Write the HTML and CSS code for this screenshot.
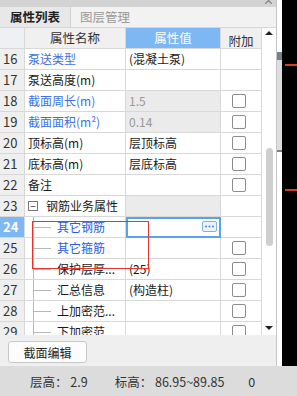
FILE: index.html
```html
<!DOCTYPE html>
<html>
<head>
  <meta charset="utf-8">
  <title>属性列表</title>
  <link rel="stylesheet" href="styles.css">
</head>
<body>
  <div class="screen">
    <div class="main">
      <div class="panel">
        <div class="titlebar">
          <svg class="close" width="7" height="7" viewBox="0 0 7 7"><path d="M0 0L7 7M7 0L0 7" stroke="#8a8a8a" stroke-width="1.4"/></svg>
        </div>

        <div class="tabs">
          <div class="tab active">属性列表</div>
          <div class="tab">图层管理</div>
        </div>

        <div class="grid-wrap">
          <div class="grid">
            <div class="row head">
              <div class="c num"></div>
              <div class="c name center">属性名称</div>
              <div class="c val center sel-head">属性值</div>
              <div class="c ext center">附加</div>
            </div>

            <div class="row">
              <div class="c num">16</div>
              <div class="c name blue">泵送类型</div>
              <div class="c val">(混凝土泵)</div>
              <div class="c ext"></div>
            </div>
            <div class="row">
              <div class="c num">17</div>
              <div class="c name">泵送高度(m)</div>
              <div class="c val"></div>
              <div class="c ext"></div>
            </div>
            <div class="row">
              <div class="c num">18</div>
              <div class="c name blue">截面周长(m)</div>
              <div class="c val off">1.5</div>
              <div class="c ext"><span class="chk"></span></div>
            </div>
            <div class="row">
              <div class="c num">19</div>
              <div class="c name blue">截面面积(m²)</div>
              <div class="c val off">0.14</div>
              <div class="c ext"><span class="chk"></span></div>
            </div>
            <div class="row">
              <div class="c num">20</div>
              <div class="c name">顶标高(m)</div>
              <div class="c val">层顶标高</div>
              <div class="c ext"><span class="chk"></span></div>
            </div>
            <div class="row">
              <div class="c num">21</div>
              <div class="c name">底标高(m)</div>
              <div class="c val">层底标高</div>
              <div class="c ext"><span class="chk"></span></div>
            </div>
            <div class="row">
              <div class="c num">22</div>
              <div class="c name">备注</div>
              <div class="c val"></div>
              <div class="c ext"><span class="chk"></span></div>
            </div>
            <div class="row">
              <div class="c num">23</div>
              <div class="c name"><span class="fold">−</span>钢筋业务属性</div>
              <div class="c val off"></div>
              <div class="c ext"></div>
            </div>
            <div class="row">
              <div class="c num current">24</div>
              <div class="c name child blue2">其它钢筋</div>
              <div class="c val editing">
                <span class="more">
                  <svg width="13" height="9" viewBox="0 0 13 9"><circle cx="3" cy="4.5" r="1" fill="#3e86d8"/><circle cx="6.5" cy="4.5" r="1" fill="#3e86d8"/><circle cx="10" cy="4.5" r="1" fill="#3e86d8"/></svg>
                </span>
              </div>
              <div class="c ext"></div>
            </div>
            <div class="row">
              <div class="c num">25</div>
              <div class="c name child blue2">其它箍筋</div>
              <div class="c val"></div>
              <div class="c ext"><span class="chk"></span></div>
            </div>
            <div class="row">
              <div class="c num">26</div>
              <div class="c name child">保护层厚...</div>
              <div class="c val">(25)</div>
              <div class="c ext"><span class="chk"></span></div>
            </div>
            <div class="row">
              <div class="c num">27</div>
              <div class="c name child">汇总信息</div>
              <div class="c val">(构造柱)</div>
              <div class="c ext"><span class="chk"></span></div>
            </div>
            <div class="row">
              <div class="c num">28</div>
              <div class="c name child">上加密范...</div>
              <div class="c val"></div>
              <div class="c ext"><span class="chk"></span></div>
            </div>
            <div class="row">
              <div class="c num">29</div>
              <div class="c name child">下加密范...</div>
              <div class="c val"></div>
              <div class="c ext"><span class="chk"></span></div>
            </div>
          </div>

          <div class="vscroll">
            <span class="arrow up"></span>
            <span class="thumb"></span>
            <span class="arrow down"></span>
          </div>

          <!-- 标注框 -->
          <div class="mark"></div>
        </div>

        <div class="actions">
          <button class="btn">截面编辑</button>
        </div>
      </div>

      <div class="gutter"><span class="handle"></span></div>

      <div class="canvas">
        <span class="redline r1"></span>
        <span class="redline r2"></span>
      </div>
    </div>

    <div class="status">
      <span class="st st-floor">层高： 2.9</span>
      <span class="st st-elev">标高： 86.95~89.85</span>
      <span class="st st-zero">0</span>
    </div>
  </div>
</body>
</html>
```

FILE: styles.css
```css
* {
  box-sizing: border-box;
}

body {
  margin: 0;
  background: #000;
  font-family: "Noto Sans CJK SC", "Liberation Sans", sans-serif;
  font-size: 12px;
  color: #1a1a1a;
}

.screen {
  width: 297px;
  height: 396px;
  display: flex;
  flex-direction: column;
}

.main {
  height: 366px;
  display: flex;
}

.panel {
  width: 277px;
  display: flex;
  flex-direction: column;
  background: #f0f0f0;
  border-right: 1px solid #c4c4c4;
}

.titlebar {
  height: 7px;
  background: #d3d3d3;
  overflow: hidden;
  display: flex;
  justify-content: flex-end;
  align-items: flex-start;
  padding-right: 4px;
}
.close {
  display: block;
  margin-top: -3px;
}

.tabs {
  height: 21px;
  display: flex;
  background: #f2f2f2;
  border-bottom: 1px solid #d6d6d6;
}
.tab {
  padding: 0 9px;
  line-height: 20px;
  font-size: 12.5px;
  color: #999;
}
.tab.active {
  color: #222;
  font-weight: bold;
  background: #e8e8e8;
  padding: 0 10px 0 10px;
  border-right: 1px solid #d0d0d0;
}

.grid-wrap {
  height: 307px;
  display: flex;
  position: relative;
  overflow: hidden;
  background: #fff;
}

.grid {
  width: 262px;
}

.row {
  display: flex;
  height: 21px;
}

.c {
  height: 21px;
  line-height: 20px;
  border-right: 1px solid #d8d8d8;
  border-bottom: 1px solid #d8d8d8;
  white-space: nowrap;
  overflow: hidden;
}
.num {
  width: 25px;
  padding-left: 3px;
  background: #efefef;
  color: #333;
  font-size: 13px;
}
.name {
  width: 101px;
  padding-left: 3px;
  display: flex;
  align-items: center;
}
.val {
  width: 95px;
  padding-left: 3px;
  position: relative;
}
.ext {
  width: 41px;
  padding-left: 11px;
  padding-top: 3px;
}
.center {
  text-align: center;
  justify-content: center;
  padding-left: 0;
}

.head .c {
  background: #f0f0f0;
  font-size: 12.5px;
  color: #333;
}
.head .num {
  background: #eef0f4;
}
.head .sel-head {
  background: #7db8f5;
  color: #fff;
}

.blue {
  color: #3f70e0;
}
.blue2 {
  color: #2f58e8;
}

.off {
  background: #ebebeb;
  color: #999;
}

.fold {
  display: inline-block;
  width: 10px;
  height: 10px;
  border: 1px solid #777;
  line-height: 7px;
  font-size: 10px;
  text-align: center;
  margin-right: 8px;
  color: #333;
}

.child {
  position: relative;
  padding-left: 32px;
}
.child::before {
  content: "";
  position: absolute;
  left: 8px;
  top: 10px;
  width: 18px;
  border-top: 1px solid #b8b8b8;
}
.child::after {
  content: "";
  position: absolute;
  left: 8px;
  top: 0;
  bottom: -1px;
  border-left: 1px solid #b8b8b8;
}

.num.current {
  background: #7db8f5;
  color: #fff;
  font-weight: bold;
}

.val.editing {
  border: 2px solid #5aa2ea;
}
.more {
  position: absolute;
  right: 2px;
  top: 2px;
  width: 15px;
  height: 11px;
  border: 1px solid #7fb2e8;
  border-radius: 2px;
  background: #eaf3fd;
  display: flex;
}
.more svg {
  display: block;
}

.chk {
  display: block;
  width: 14px;
  height: 14px;
  border: 1.5px solid #8c8c8c;
  border-radius: 2px;
  background: #fff;
}

.vscroll {
  width: 14px;
  display: flex;
  flex-direction: column;
  align-items: center;
  background: #fff;
}
.arrow {
  width: 0;
  height: 0;
  border-left: 4px solid transparent;
  border-right: 4px solid transparent;
}
.arrow.up {
  margin-top: 3px;
  border-bottom: 4px solid #222;
}
.arrow.down {
  margin-top: 80px;
  border-top: 4px solid #222;
}
.thumb {
  margin-top: 113px;
  width: 7px;
  height: 98px;
  border-radius: 4px;
  background: #cfcfcf;
}

.mark {
  position: absolute;
  left: 32px;
  top: 193px;
  width: 117px;
  height: 48px;
  border: 1.5px solid #e8332f;
}

.actions {
  height: 31px;
  padding: 6px 0 0 8px;
  background: #efefef;
}
.btn {
  width: 79px;
  height: 22px;
  padding: 0;
  border: 1px solid #c9c9c9;
  border-radius: 3px;
  background: #fcfcfc;
  font-family: "Noto Sans CJK SC", sans-serif;
  font-size: 12px;
  color: #222;
}

.gutter {
  width: 5px;
  background: #fff;
  padding-top: 52px;
}
.handle {
  display: block;
  height: 100px;
  background: #dedede;
  border-top: 8px solid #7a8088;
  border-bottom: 2px solid #7a8088;
}

.canvas {
  flex: 1;
  background: #000;
  position: relative;
}
.redline {
  position: absolute;
  left: 3px;
  right: 0;
  height: 2px;
  background: #d2401f;
}
.r1 {
  top: 64px;
}
.r2 {
  top: 189px;
}

.status {
  height: 30px;
  background: #dcdcdc;
  display: flex;
  align-items: center;
  color: #333;
  font-size: 12.5px;
}
.st-floor {
  margin-left: 30px;
}
.st-elev {
  margin-left: 27px;
}
.st-zero {
  margin-left: 24px;
}
```
